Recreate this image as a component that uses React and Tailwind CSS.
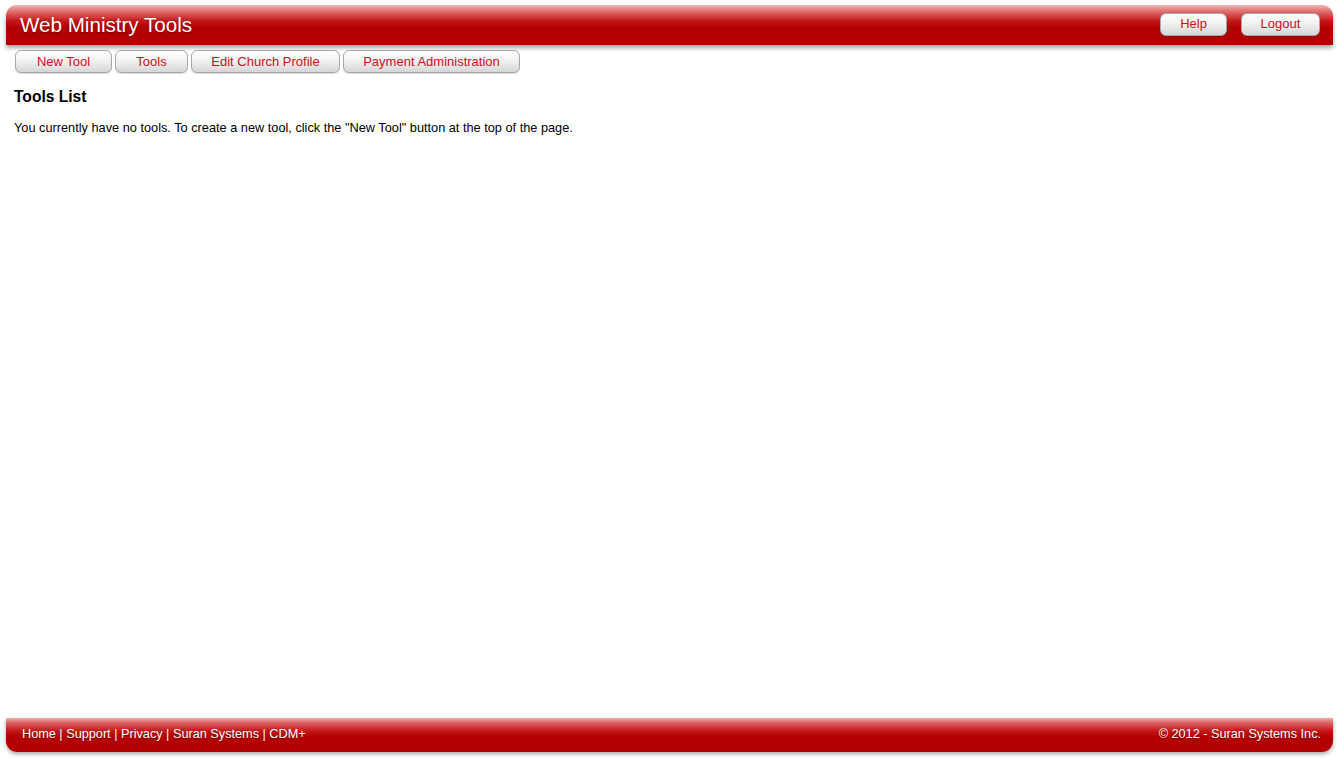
import React from 'react'

const navItems = [
  { label: 'New Tool', w: 'w-[97px]' },
  { label: 'Tools', w: 'w-[73px]' },
  { label: 'Edit Church Profile', w: 'w-[149px]' },
  { label: 'Payment Administration', w: 'w-[177px]' },
]

const footerLinks = ['Home', 'Support', 'Privacy', 'Suran Systems', 'CDM+']

function GrayButton({ children, className }) {
  return (
    <button
      className={`h-[23px] rounded-[6px] border border-[#a8a8a8] bg-[linear-gradient(to_bottom,#ffffff_0%,#f2f2f2_45%,#d6d6d6_100%)] text-[13px] text-[#c8101a] shadow-[0_1px_1px_rgba(0,0,0,0.15)] ${className}`}
    >
      {children}
    </button>
  )
}

export default function App() {
  return (
    <div className="min-h-[758px] flex flex-col bg-white font-['Liberation_Sans',Arial,sans-serif] text-black">
      <header className="ml-[6px] mr-[4px] mt-[5px] h-[40px] rounded-t-[11px] bg-[linear-gradient(to_bottom,#f3b8b8_0%,#e27676_14%,#c31818_40%,#b40000_55%,#b00000_100%)] shadow-[0_3px_4px_rgba(0,0,0,0.35)] flex items-center justify-between pl-[14px] pr-[13px]">
        <h1 className="text-[20.6px] text-white leading-none [text-shadow:0_1px_1px_rgba(0,0,0,0.3)]">Web Ministry Tools</h1>
        <div className="flex items-center gap-[14px] -mt-[2px]">
          <GrayButton className="w-[67px]">Help</GrayButton>
          <GrayButton className="w-[79px]">Logout</GrayButton>
        </div>
      </header>

      <nav className="flex gap-[3px] pl-[15px] mt-[5px]">
        {navItems.map((item) => (
          <GrayButton key={item.label} className={item.w}>{item.label}</GrayButton>
        ))}
      </nav>

      <main className="flex-1 px-[14px]">
        <h2 className="mt-[14px] text-[15.6px] font-bold leading-[20px]">Tools List</h2>
        <p className="mt-[13px] text-[12.75px] leading-[16px]">
          You currently have no tools. To create a new tool, click the "New Tool" button at the top of the page.
        </p>
      </main>

      <footer className="ml-[6px] mr-[4px] mb-[6px] h-[34px] rounded-b-[11px] bg-[linear-gradient(to_bottom,#f0b0b0_0%,#dc6a6a_12%,#c31818_38%,#b40000_55%,#b00000_100%)] shadow-[0_2px_4px_rgba(0,0,0,0.35)] flex items-center justify-between pl-[16px] pr-[12px] text-[12.7px] text-white [text-shadow:0_1px_1px_rgba(0,0,0,0.3)]">
        <div>
          {footerLinks.map((l, i) => (
            <span key={l}>
              <a className="cursor-pointer">{l}</a>
              {i < footerLinks.length - 1 && ' | '}
            </span>
          ))}
        </div>
        <div>© 2012 - Suran Systems Inc.</div>
      </footer>
    </div>
  )
}
